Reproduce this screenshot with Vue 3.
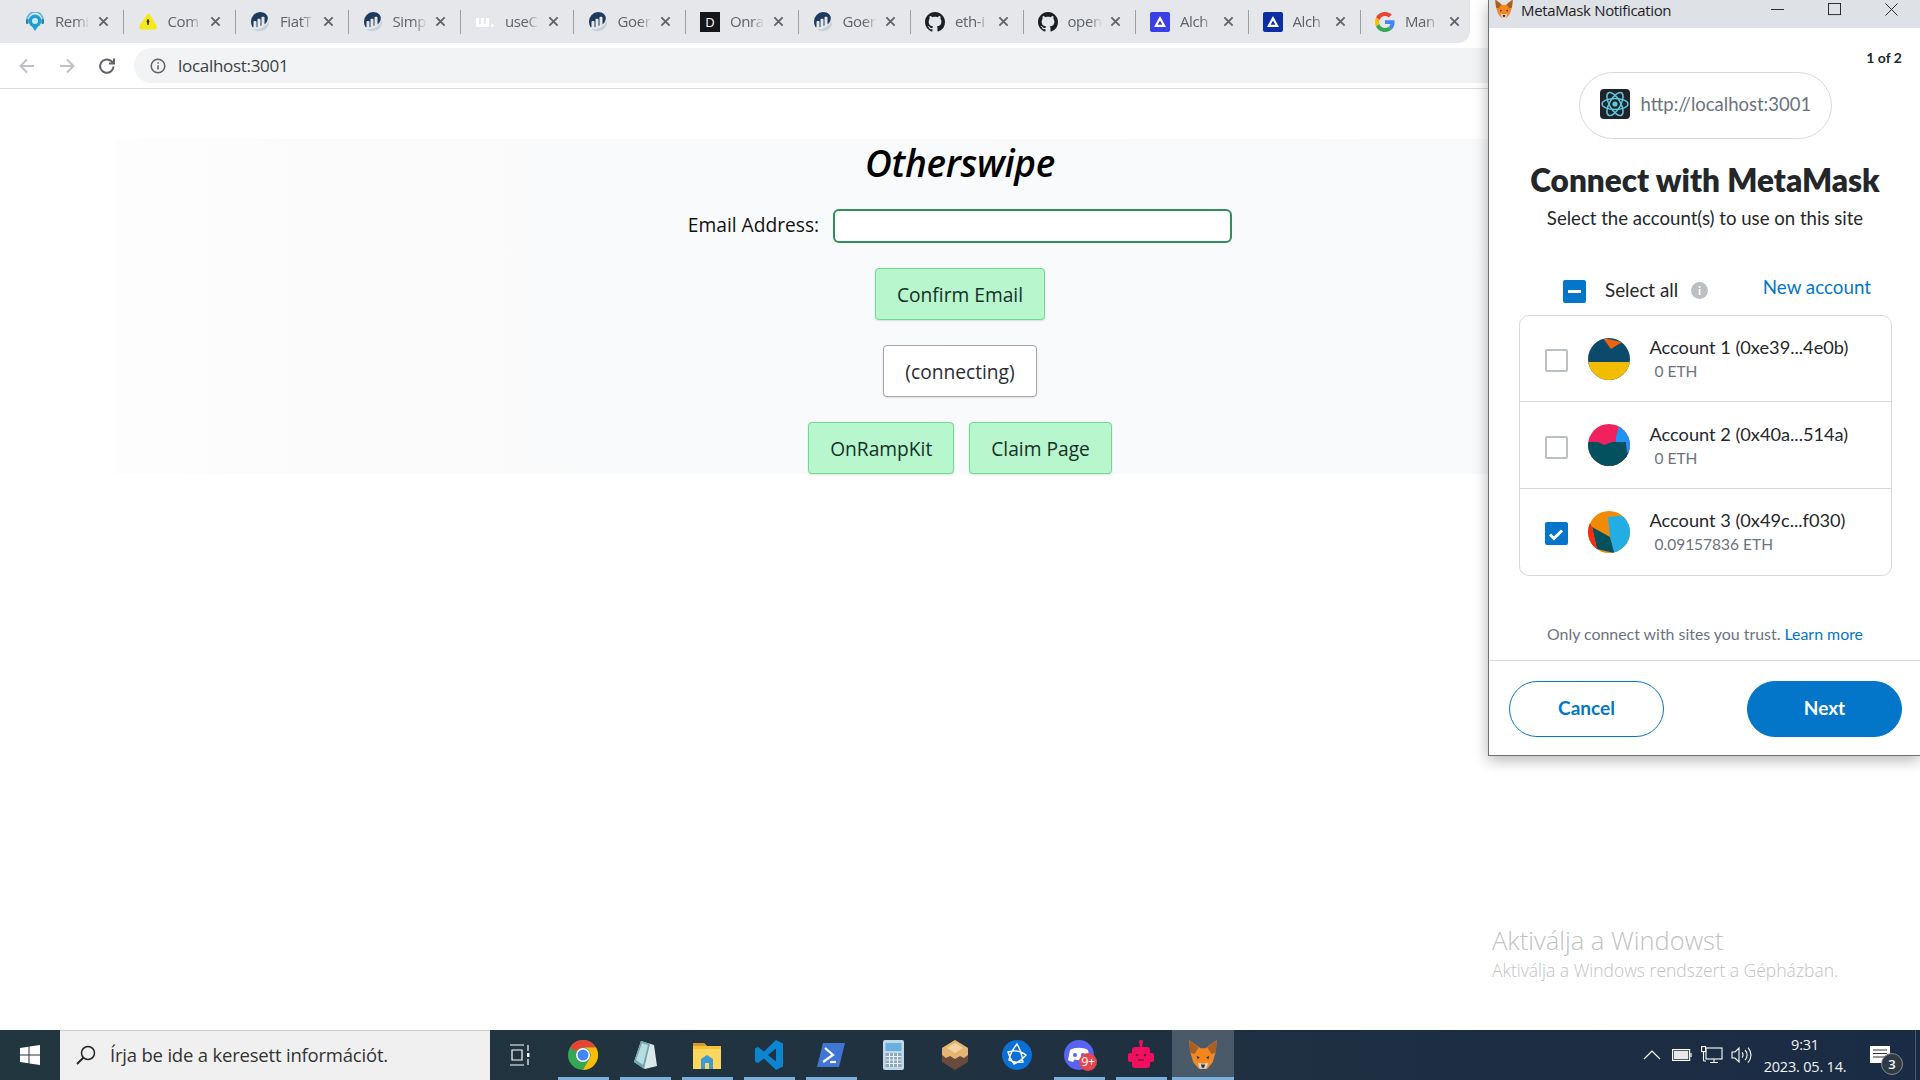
<template>
  <div class="desktop">
    <svg class="defs" width="0" height="0">
      <symbol id="etherscan" viewBox="0 0 20 20">
        <path d="M19 9a9 9 0 0 1-8 10c-3 .6-6-.5-8-2 6 1.500 13-2 16-8z" fill="#c6ced8"/>
        <path d="M10 0a9.500 9.500 0 0 0-9 9.500c0 2 .6 4 1.500 5.500.5.400 1 .3 1-.3V9.800c0-.5.3-.8.8-.8h1.400c.5 0 .8.300.8.800v5.400l1-.2V7.500c0-.5.300-.8.800-.8h1.400c.5 0 .8.300.8.800V14l1-.4V5.500c0-.5.300-.8.800-.8h1.400c.5 0 .8.300.8.800v7c2-1.500 3-3.500 3.200-5.500C18.600 3.500 15 0 10 0z" fill="#1f3a5f"/>
      </symbol>
      <symbol id="remix" viewBox="0 0 20 20">
        <circle cx="10" cy="9" r="6.500" fill="#1f9ed1"/>
        <path d="M2 10V8a8 8 0 0 1 16 0v2" fill="none" stroke="#5fb6d8" stroke-width="1.600"/>
        <rect x="1" y="7" width="2.500" height="5" rx="1" fill="#2a83a8"/>
        <rect x="16.500" y="7" width="2.500" height="5" rx="1" fill="#2a83a8"/>
        <path d="M7 14.500l3 4.500 3-4.500z" fill="#1f9ed1"/>
        <circle cx="10" cy="9" r="3" fill="#c9e9f5"/>
      </symbol>
      <symbol id="compound" viewBox="0 0 20 20">
        <path d="M9 2.500a2 2 0 0 1 3 0l6.500 11c1 1.800-.2 4-2.200 4H3.700c-2 0-3.200-2.200-2.200-4z" fill="#f5ea16"/>
        <rect x="9.200" y="7" width="1.600" height="6" rx=".8" fill="#333"/>
        <circle cx="10" cy="9.500" r="1.400" fill="#333"/>
      </symbol>
      <symbol id="wagmi" viewBox="0 0 20 20">
        <path d="M1 6h3v6h2V6h3v6h2V6h3v9H1z" fill="#fff"/>
        <circle cx="17.500" cy="13.500" r="1.700" fill="#fff"/>
      </symbol>
      <symbol id="github" viewBox="0 0 16 16">
        <path d="M8 0C3.580 0 0 3.580 0 8c0 3.540 2.290 6.530 5.470 7.590.4.070.55-.17.55-.38 0-.19-.01-.82-.01-1.490-2.010.37-2.530-.49-2.690-.94-.09-.23-.48-.94-.82-1.130-.28-.15-.68-.52-.01-.53.63-.01 1.080.58 1.230.82.72 1.210 1.870.87 2.330.66.070-.52.280-.87.510-1.070-1.780-.2-3.640-.89-3.640-3.950 0-.87.310-1.590.820-2.150-.08-.2-.36-1.020.080-2.120 0 0 .67-.21 2.200.82.640-.18 1.320-.27 2-.27.680 0 1.360.090 2 .27 1.530-1.040 2.200-.82 2.200-.82.440 1.100.160 1.920.080 2.120.510.560.820 1.270.820 2.150 0 3.070-1.870 3.750-3.650 3.950.29.250.54.730.54 1.480 0 1.070-.01 1.930-.01 2.200 0 .21.150.46.550.38A8.013 8.013 0 0016 8c0-4.420-3.580-8-8-8z" fill="#1b1f23"/>
      </symbol>
      <symbol id="google" viewBox="0 0 48 48">
        <path fill="#EA4335" d="M24 9.500c3.540 0 6.710 1.220 9.210 3.600l6.850-6.850C35.900 2.380 30.470 0 24 0 14.620 0 6.510 5.380 2.560 13.220l7.980 6.190C12.430 13.720 17.740 9.500 24 9.500z"/>
        <path fill="#4285F4" d="M46.980 24.550c0-1.570-.15-3.090-.38-4.550H24v9.020h12.940c-.58 2.960-2.260 5.480-4.780 7.180l7.730 6c4.510-4.180 7.090-10.360 7.090-17.650z"/>
        <path fill="#FBBC05" d="M10.530 28.590c-.48-1.450-.76-2.990-.76-4.590s.27-3.140.76-4.590l-7.980-6.190C.92 16.460 0 20.120 0 24c0 3.880.92 7.540 2.560 10.780l7.970-6.190z"/>
        <path fill="#34A853" d="M24 48c6.480 0 11.930-2.130 15.890-5.810l-7.730-6c-2.150 1.450-4.920 2.300-8.160 2.300-6.260 0-11.570-4.220-13.470-9.910l-7.980 6.190C6.510 42.620 14.620 48 24 48z"/>
      </symbol>
      <symbol id="fox" viewBox="0 0 30 30">
        <path d="M2 1l11 8h4l11-8-1 11-3 10-5 6h-8l-5-6-3-10z" fill="#ed8a2c"/>
        <path d="M2 1l9 7-4 6-4-1z" fill="#a85f22"/>
        <path d="M28 1l-9 7 4 6 4-1z" fill="#a85f22"/>
        <path d="M7 15l6-6h4l6 6-3 7H10z" fill="#f6851b"/>
        <path d="M10 22l3 1h4l3-1-2 6h-6z" fill="#e4d5c8"/>
        <path d="M13 24h4l-1 3h-2z" fill="#233447"/>
        <path d="M9 16l3 1-2 2zM21 16l-3 1 2 2z" fill="#233447"/>
      </symbol>
    </svg>

    <div class="browser">
      <div class="tabstrip">
        <div class="tablist">
          <div v-for="(tab, i) in tabs" :key="i" class="tab">
            <svg v-if="tab.icon" class="favicon"><use :href="'#' + tab.icon" /></svg>
            <span v-else-if="tab.alchemy" class="favicon alchemy" :style="{ background: tab.alchemy }">
              <svg viewBox="0 0 20 20" width="20" height="20"><path d="M10 4l6 11H4z M10 8.500l-2.400 4.300h4.800z" fill="#fff" fill-rule="evenodd"/></svg>
            </span>
            <span v-else class="favicon letter">D</span>
            <span class="tab-title">{{ tab.title }}</span>
            <svg class="tab-close" viewBox="0 0 12 12"><path d="M1.500 1.500l9 9M10.500 1.500l-9 9" /></svg>
          </div>
        </div>
        <div class="active-tab"><span class="active-icon"></span></div>
      </div>

      <div class="toolbar">
        <svg class="nav faded" viewBox="0 0 20 20"><path d="M17 10H4M10 3.500L3.500 10l6.500 6.500" /></svg>
        <svg class="nav faded" viewBox="0 0 20 20"><path d="M3 10h13M10 3.500l6.500 6.500-6.500 6.500" /></svg>
        <svg class="nav" viewBox="0 0 20 20"><path d="M16.500 10.500a6.700 6.700 0 1 1-2-5.200L17 7.500M17 2.500v5h-5" /></svg>
        <div class="omnibox">
          <svg class="info" viewBox="0 0 16 16"><circle cx="8" cy="8" r="6.800" /><path d="M8 7.200v4.300M8 4.300v1.400" /></svg>
          <span>localhost:3001</span>
        </div>
      </div>

      <main class="page">
        <section class="panel">
          <h1>Otherswipe</h1>
          <div class="email-row">
            <label for="email">Email Address:</label>
            <input id="email" type="text" />
          </div>
          <button class="btn green">Confirm Email</button>
          <button class="btn plain">(connecting)</button>
          <div class="btn-row">
            <button class="btn green">OnRampKit</button>
            <button class="btn green">Claim Page</button>
          </div>
        </section>
      </main>
    </div>

    <footer class="taskbar">
      <div class="start">
        <svg viewBox="0 0 20 20" width="20" height="20"><path d="M0 3l8.500-1.200V9.500H0zM9.500 1.600L20 0v9.500H9.500zM0 10.500h8.500v7.700L0 17zM9.500 10.500H20V20L9.500 18.400z" fill="#fff"/></svg>
      </div>
      <div class="search">
        <svg viewBox="0 0 22 22" width="22" height="22"><circle cx="13" cy="9" r="6.500" fill="none" stroke="#222" stroke-width="1.500"/><path d="M8.500 13.500L2 20" stroke="#222" stroke-width="1.800"/></svg>
        <span>Írja be ide a keresett információt.</span>
      </div>

      <div class="slot">
        <svg viewBox="0 0 24 24" width="24" height="24" fill="none" stroke="#fff" stroke-width="1.200"><path d="M1 2h14M1 22h14M3 7h10v10H3zM19 2v6M19 16v6"/><rect x="18" y="10" width="2.400" height="4" fill="#fff" stroke="none"/></svg>
      </div>
      <div v-for="app in apps" :key="app.name" class="slot" :class="{ open: app.open, focused: app.focused }">
        <svg v-if="app.name === 'chrome'" viewBox="0 0 30 30" width="30" height="30">
          <circle cx="15" cy="15" r="15" fill="#34a853"/>
          <path d="M15 0a15 15 0 0 1 13 7.500H15a7.500 7.500 0 0 0-6.500 3.800L2 7.500A15 15 0 0 1 15 0z" fill="#ea4335"/>
          <path d="M28 7.500A15 15 0 0 1 15 30l6.500-11.200A7.500 7.500 0 0 0 15 7.500z" fill="#fbbc04"/>
          <circle cx="15" cy="15" r="7" fill="#fff"/><circle cx="15" cy="15" r="5.500" fill="#4285f4"/>
        </svg>
        <svg v-else-if="app.name === 'notepad'" viewBox="0 0 30 30" width="30" height="30">
          <path d="M11 1l13 4 3 21-12 3L4 22z" fill="#d9e8ea"/>
          <path d="M11 1l9 3-6 25-10-7z" fill="#6fa5ac"/>
          <path d="M12 3l6 2-5 20-7-5z" fill="#b8dde0"/>
        </svg>
        <svg v-else-if="app.name === 'folder'" viewBox="0 0 30 30" width="30" height="30">
          <path d="M1 3h11l3 3h14v23H1z" fill="#f5c33b"/>
          <path d="M1 3h11l3 3H1z" fill="#d9972b"/>
          <path d="M1 9h28v20H1z" fill="#fbd75f"/>
          <path d="M9 29V19l6-4 6 4v10h-4v-6h-4v6z" fill="#3f9bd8"/>
        </svg>
        <svg v-else-if="app.name === 'vscode'" viewBox="0 0 30 30" width="30" height="30">
          <path fill-rule="evenodd" d="M22 0l7 3.500v23L22 30 10 18.500 4 23l-3-1.500v-13L4 7l6 4.500zM22 8.500L14 15l8 6.500z" fill="#0d84d0"/>
        </svg>
        <svg v-else-if="app.name === 'powershell'" viewBox="0 0 30 30" width="30" height="30">
          <path d="M7 3h22l-6 24H1z" fill="#3f76d6"/>
          <path d="M9 8l8 7-10 7" fill="none" stroke="#fff" stroke-width="2.200"/><path d="M14 22h6" stroke="#fff" stroke-width="2.200"/>
        </svg>
        <svg v-else-if="app.name === 'calc'" viewBox="0 0 30 30" width="30" height="30">
          <rect x="5" y="0" width="21" height="30" rx="2" fill="#bfd9ea"/>
          <rect x="7.500" y="3" width="16" height="8" fill="#6ab0dc"/>
          <rect x="7.500" y="13" width="16" height="14" fill="#8fa9ba"/>
          <path d="M7.500 16.500h16M7.500 20h16M7.500 23.500h16M11.500 13v14M15.500 13v14M19.500 13v14" stroke="#e6f0f6" stroke-width="1"/>
        </svg>
        <svg v-else-if="app.name === 'box'" viewBox="0 0 30 30" width="30" height="30">
          <path d="M15 0l13 8v14l-13 8-13-8V8z" fill="#6b4a3e"/>
          <path d="M15 0l13 8v7l-4 3-4-2-5 3-5-3-4 2-4-3V8z" fill="#e6b574"/>
          <path d="M15 3l8 5-8 5-8-5z" fill="#f3d3a0"/>
        </svg>
        <svg v-else-if="app.name === 'blue'" viewBox="0 0 30 30" width="30" height="30">
          <circle cx="15" cy="15" r="15" fill="#0a70d6"/>
          <path d="M15 4c3 5 5 11 6 18-5 1-10 0-14-2 1-6 4-11 8-16zM6 12c6-2 13-1 18 3-3 4-7 7-12 9-3-4-5-8-6-12z" fill="none" stroke="#fff" stroke-width="1.400"/>
        </svg>
        <div v-else-if="app.name === 'discord'" class="discord">
          <svg viewBox="0 0 30 30" width="30" height="30">
            <ellipse cx="15" cy="15" rx="15" ry="15" fill="#5865f2"/>
            <path d="M6 10c5-3 13-3 18 0l2 10c-1.500 1-3 1.500-5 2l-1.500-2.500c-3 .7-6 .7-9 0L9 22c-2-.5-3.500-1-5-2z" fill="#fff"/>
            <circle cx="11" cy="15" r="2" fill="#5865f2"/><circle cx="19" cy="15" r="2" fill="#5865f2"/>
          </svg>
          <span class="badge">9+</span>
        </div>
        <svg v-else-if="app.name === 'robot'" viewBox="0 0 30 30" width="30" height="30">
          <path d="M15 0v7" stroke="#f0105f" stroke-width="2.500"/><circle cx="15" cy="2" r="2" fill="#f0105f"/>
          <rect x="6" y="7" width="18" height="21" rx="3" fill="#f0105f"/>
          <rect x="2" y="13" width="5" height="9" rx="2" fill="#f0105f"/><rect x="23" y="13" width="5" height="9" rx="2" fill="#f0105f"/>
          <circle cx="11" cy="15" r="1.300" fill="#7b0c36"/><circle cx="19" cy="15" r="1.300" fill="#7b0c36"/><path d="M12 20h6" stroke="#7b0c36" stroke-width="1.200"/>
        </svg>
        <svg v-else class="fox-icon"><use href="#fox" /></svg>
      </div>

      <div class="tray">
        <div class="tray-icon"><svg viewBox="0 0 18 10" width="18" height="10" fill="none" stroke="#fff" stroke-width="1.200"><path d="M1 9l8-8 8 8"/></svg></div>
        <div class="tray-icon"><svg viewBox="0 0 20 12" width="20" height="12" fill="none" stroke="#fff" stroke-width="1.200"><rect x=".6" y=".6" width="17" height="10.800"/><rect x="2" y="2" width="14.200" height="8" fill="#e8e8e8" stroke="none"/><path d="M19 4v4"/></svg></div>
        <div class="tray-icon"><svg viewBox="0 0 22 18" width="22" height="18" fill="none" stroke="#fff" stroke-width="1.100"><rect x="5" y="2" width="16" height="11"/><path d="M13 13v3M9 16.500h8M2.500 6v9M2.500 15H5"/><rect x=".6" y=".6" width="4" height="5" fill="#1c2f45"/></svg></div>
        <div class="tray-icon"><svg viewBox="0 0 22 18" width="22" height="18" fill="none" stroke="#fff" stroke-width="1.100"><path d="M1 6h3l4-4v14l-4-4H1zM11 6.500a3.500 3.500 0 0 1 0 5M14 4a7 7 0 0 1 0 10M17 1.500a11 11 0 0 1 0 15"/></svg></div>
        <div class="clock">
          <span>9:31</span>
          <span>2023. 05. 14.</span>
        </div>
        <div class="notif">
          <svg viewBox="0 0 20 18" width="20" height="18"><path d="M0 0h20v17H0z" fill="#fff"/><path d="M3 4h14M3 7.500h14M3 11h14" stroke="#333" stroke-width="1"/></svg>
          <span class="notif-count">3</span>
        </div>
        <div class="tray-edge"></div>
      </div>
    </footer>

    <div class="watermark">
      <div class="wm-big">Aktiválja a Windowst</div>
      <div class="wm-small">Aktiválja a Windows rendszert a Gépházban.</div>
    </div>

    <aside class="popup">
      <header class="titlebar">
        <svg class="title-fox"><use href="#fox" /></svg>
        <span class="title-text">MetaMask Notification</span>
        <svg class="win-btn" viewBox="0 0 14 14"><path d="M0 7h14" /></svg>
        <svg class="win-btn" viewBox="0 0 14 14"><rect x=".5" y=".5" width="13" height="12" /></svg>
        <svg class="win-btn" viewBox="0 0 14 14"><path d="M.5.500l13 13M13.500.500l-13 13" /></svg>
      </header>

      <div class="mm-body">
        <div class="counter">1 of 2</div>
        <div class="origin">
          <span class="origin-icon">
            <svg viewBox="0 0 30 30" width="30" height="30" fill="none" stroke="#5fc6dc" stroke-width="1.500">
              <ellipse cx="15" cy="15" rx="13" ry="5.500" />
              <ellipse cx="15" cy="15" rx="13" ry="5.500" transform="rotate(60 15 15)" />
              <ellipse cx="15" cy="15" rx="13" ry="5.500" transform="rotate(120 15 15)" />
              <circle cx="15" cy="15" r="2.600" fill="#5fc6dc" stroke="none" />
            </svg>
          </span>
          <span>http://localhost:3001</span>
        </div>
        <h2>Connect with MetaMask</h2>
        <p class="subtitle">Select the account(s) to use on this site</p>

        <div class="select-row">
          <span class="check on"><span class="dash"></span></span>
          <span class="select-all">Select all</span>
          <span class="info-dot">i</span>
          <a class="new-account">New account</a>
        </div>

        <ul class="accounts">
          <li v-for="acc in accounts" :key="acc.name" class="account">
            <span class="check" :class="{ on: acc.checked }">
              <svg v-if="acc.checked" viewBox="0 0 22 22" width="22" height="22"><path d="M5 11.500l4 4 8-8" fill="none" stroke="#fff" stroke-width="3"/></svg>
            </span>
            <svg class="avatar" viewBox="0 0 42 42">
              <rect width="42" height="42" :fill="acc.base" />
              <polygon v-for="(shape, j) in acc.shapes" :key="j" :points="shape.points" :fill="shape.fill" />
            </svg>
            <div class="acc-text">
              <div class="acc-name">{{ acc.name }}</div>
              <div class="acc-bal">{{ acc.balance }}</div>
            </div>
          </li>
        </ul>

        <p class="trust">Only connect with sites you trust. <a>Learn more</a></p>
        <div class="actions">
          <button class="pill outline">Cancel</button>
          <button class="pill solid">Next</button>
        </div>
      </div>
    </aside>
  </div>
</template>

<script setup>
const tabs = [
  { icon: 'remix', title: 'Remi' },
  { icon: 'compound', title: 'Com' },
  { icon: 'etherscan', title: 'FiatT' },
  { icon: 'etherscan', title: 'Simp' },
  { icon: 'wagmi', title: 'useC' },
  { icon: 'etherscan', title: 'Goer' },
  { title: 'Onra' },
  { icon: 'etherscan', title: 'Goer' },
  { icon: 'github', title: 'eth-i' },
  { icon: 'github', title: 'open' },
  { alchemy: '#3a3fe6', title: 'Alch' },
  { alchemy: '#0b2fa3', title: 'Alch' },
  { icon: 'google', title: 'Man' },
]

const apps = [
  { name: 'chrome', open: true },
  { name: 'notepad', open: true },
  { name: 'folder', open: true },
  { name: 'vscode', open: true },
  { name: 'powershell', open: true },
  { name: 'calc' },
  { name: 'box' },
  { name: 'blue' },
  { name: 'discord', open: true },
  { name: 'robot', open: true },
  { name: 'fox', open: true, focused: true },
]

const accounts = [
  {
    name: 'Account 1 (0xe39...4e0b)',
    balance: '0 ETH',
    base: '#0b4a6b',
    shapes: [
      { fill: '#f2bc00', points: '0,24 42,24 42,42 0,42' },
      { fill: '#f0640f', points: '15,0 34,4 23,11' },
    ],
  },
  {
    name: 'Account 2 (0x40a...514a)',
    balance: '0 ETH',
    base: '#f0215f',
    shapes: [
      { fill: '#03505f', points: '0,18 10,18 16,21 24,18 38,18 39,28 42,31 42,42 0,42' },
      { fill: '#2094f3', points: '28,13 31,2 42,8 42,31 39,28 38,18 28,18' },
    ],
  },
  {
    name: 'Account 3 (0x49c...f030)',
    balance: '0.09157836 ETH',
    checked: true,
    base: '#f18a07',
    shapes: [
      { fill: '#23ade5', points: '20,6 42,4 42,42 26,42 22,26' },
      { fill: '#03505f', points: '4,16 22,26 26,41 26,42 9,38' },
      { fill: '#f2300f', points: '0,8 4,16 9,38 9,42 0,42' },
    ],
  },
]
</script>

<style>
html,
body {
  margin: 0;
  overflow: hidden;
  background: #fff;
}
</style>

<style scoped>
.desktop {
  position: relative;
  width: 1920px;
  height: 1080px;
  display: flex;
  flex-direction: column;
  overflow: hidden;
  font-family: "Open Sans", sans-serif;
  background: #fff;
}

.defs {
  position: absolute;
}

.browser {
  flex: 1;
  display: flex;
  flex-direction: column;
}

.tabstrip {
  height: 43px;
  display: flex;
  background: #fff;
}

.tablist {
  width: 1470px;
  box-sizing: border-box;
  padding-left: 11px;
  display: flex;
  align-items: center;
  background: #e5e7ea;
  border-radius: 0 0 12px 0;
}

.tab {
  width: 112.5px;
  height: 24px;
  flex: none;
  box-sizing: border-box;
  padding: 0 14px;
  display: flex;
  align-items: center;
  border-right: 1px solid #9a9da1;
}

.tab:last-child {
  border-right: none;
}

.favicon {
  width: 20px;
  height: 20px;
  flex: none;
}

.alchemy {
  display: block;
  border-radius: 2px;
}

.letter {
  background: #14171a;
  color: #fff;
  font-size: 13px;
  line-height: 20px;
  text-align: center;
}

.tab-title {
  width: 38px;
  margin: -2px 0 0 10px;
  white-space: nowrap;
  font-size: 15px;
  letter-spacing: -0.4px;
  color: #5f6368;
  -webkit-mask-image: linear-gradient(90deg, #000 55%, rgba(0, 0, 0, 0.15) 85%);
  mask-image: linear-gradient(90deg, #000 55%, rgba(0, 0, 0, 0.15) 85%);
}

.tab-close {
  width: 11px;
  height: 11px;
  margin-left: auto;
  fill: none;
  stroke: #5f6368;
  stroke-width: 2;
}

.active-tab {
  flex: 1;
  display: flex;
  align-items: center;
  justify-content: flex-end;
}

.active-icon {
  width: 4px;
  height: 20px;
  background: #222;
}

.toolbar {
  height: 46px;
  box-sizing: border-box;
  padding: 5px 0 5px 17px;
  display: flex;
  align-items: center;
  gap: 20px;
  border-bottom: 1px solid #dadce0;
}

.nav {
  width: 20px;
  height: 20px;
  fill: none;
  stroke: #5f6368;
  stroke-width: 2;
}

.nav.faded {
  stroke: #bdc1c6;
}

.omnibox {
  flex: 1;
  height: 35px;
  margin-left: -3px;
  padding-left: 16px;
  display: flex;
  align-items: center;
  gap: 12px;
  background: #f1f3f4;
  border-radius: 18px 0 0 18px;
  font-size: 17px;
  letter-spacing: -0.3px;
  color: #3c4043;
}

.info {
  width: 16px;
  height: 16px;
  fill: none;
  stroke: #5f6368;
  stroke-width: 1.500;
}

.page {
  flex: 1;
  padding-top: 50px;
}

.panel {
  width: 1690px;
  height: 335px;
  margin: 0 auto;
  display: flex;
  flex-direction: column;
  align-items: center;
  background: linear-gradient(90deg, #fdfdfd, #fbfbfc 12%, #f9fafb 38%, #f8f9fa);
}

h1 {
  margin: 0;
  height: 48px;
  font-size: 37px;
  line-height: 48px;
  font-style: italic;
  font-weight: 600;
  letter-spacing: -0.3px;
  color: #000;
}

.email-row {
  margin-top: 22px;
  display: flex;
  align-items: center;
  gap: 14px;
}

.email-row label {
  margin-top: -3px;
  font-size: 19.200px;
  font-weight: 500;
  color: #111;
}

.email-row input {
  width: 399px;
  height: 34px;
  box-sizing: border-box;
  border: 2px solid #2f8f5b;
  border-radius: 6px;
  background: #fff;
  outline: none;
}

.btn {
  height: 52px;
  box-sizing: border-box;
  margin-top: 25px;
  padding: 0 21px;
  border-radius: 4px;
  font-family: inherit;
  font-size: 19.200px;
  font-weight: 500;
  box-shadow: 0 1px 2px rgba(0, 0, 0, 0.12);
}

.btn.green {
  background: #b8f6cd;
  border: 1px solid #72d995;
  color: #16302a;
}

.btn.plain {
  background: #fff;
  border: 1px solid #a5a5aa;
  color: #2b2b33;
}

.btn-row {
  margin-top: 25px;
  display: flex;
  gap: 15px;
}

.btn-row .btn {
  margin-top: 0;
}

.taskbar {
  height: 50px;
  flex: none;
  display: flex;
  background: linear-gradient(90deg, #21363f, #203240 50%, #1a2b45);
}

.start {
  width: 60px;
  display: flex;
  align-items: center;
  justify-content: center;
}

.search {
  width: 430px;
  box-sizing: border-box;
  padding: 0 0 2px 15px;
  display: flex;
  align-items: center;
  gap: 13px;
  background: #f0f0f0;
  border-top: 1px solid #c8c8c8;
  font-size: 18.500px;
  letter-spacing: -0.2px;
  color: #333;
}

.slot {
  position: relative;
  width: 62px;
  display: flex;
  align-items: center;
  justify-content: center;
}

.slot.focused {
  background: #4a5a68;
}

.slot.open::after {
  content: '';
  position: absolute;
  left: 6px;
  right: 5px;
  bottom: 0;
  height: 3px;
  background: #7ab0de;
}

.slot.focused::after {
  left: 0;
  right: 0;
}

.fox-icon {
  width: 32px;
  height: 32px;
}

.discord {
  position: relative;
  width: 30px;
  height: 30px;
}

.badge {
  position: absolute;
  right: -3px;
  bottom: -1px;
  width: 18px;
  height: 18px;
  border-radius: 50%;
  background: #e2474f;
  color: #fff;
  font-size: 12.500px;
  line-height: 18px;
  letter-spacing: -0.5px;
  text-align: center;
}

.tray {
  margin-left: auto;
  width: 283px;
  display: flex;
  align-items: center;
}

.tray-icon {
  width: 30px;
  display: flex;
  justify-content: center;
}

.clock {
  width: 96px;
  display: flex;
  flex-direction: column;
  align-items: center;
  gap: 3px;
  font-size: 14.500px;
  line-height: 19px;
  letter-spacing: -0.2px;
  color: #f2f2f2;
}

.notif {
  position: relative;
  width: 54px;
  height: 50px;
  display: flex;
  align-items: center;
  justify-content: center;
}

.notif-count {
  position: absolute;
  left: 28px;
  top: 23px;
  width: 20px;
  height: 20px;
  border: 1px solid #888;
  border-radius: 50%;
  background: #2f3b44;
  color: #fff;
  font-size: 13px;
  font-weight: 600;
  line-height: 20px;
  text-align: center;
}

.tray-edge {
  width: 1px;
  height: 100%;
  margin-left: 8px;
  background: #4c5b6c;
}

.watermark {
  position: absolute;
  left: 1492px;
  top: 922px;
  color: #c2c2c2;
  font-weight: 300;
}

.wm-big {
  font-size: 25.500px;
  line-height: 36px;
}

.wm-small {
  font-size: 17.500px;
  line-height: 24px;
}

.popup {
  position: absolute;
  left: 1488px;
  top: 0;
  width: 432px;
  height: 756px;
  box-sizing: border-box;
  display: flex;
  flex-direction: column;
  background: #fff;
  border-left: 1px solid #6f6f6f;
  border-bottom: 1px solid #6f6f6f;
  box-shadow: 0 4px 14px rgba(0, 0, 0, 0.3);
}

.titlebar {
  height: 28px;
  box-sizing: border-box;
  padding-bottom: 9px;
  flex: none;
  display: flex;
  align-items: center;
  background: #dee1e6;
  font-size: 15px;
  color: #1f1f1f;
}

.title-fox {
  width: 20px;
  height: 20px;
  margin: -2px 0 0 5px;
}

.title-text {
  margin-left: 7px;
  letter-spacing: -0.35px;
}

.win-btn {
  width: 13px;
  height: 13px;
  fill: none;
  stroke: #222;
  stroke-width: 1;
  margin-left: 44px;
}

.title-text + .win-btn {
  margin-left: auto;
}

.win-btn:last-child {
  margin-right: 22px;
}

.mm-body {
  flex: 1;
  padding-left: 1px;
  display: flex;
  flex-direction: column;
  align-items: center;
  font-family: Lato, sans-serif;
  color: #24272a;
}

.counter {
  align-self: flex-end;
  margin: 20px 18px 0 0;
  font-size: 14px;
  line-height: 20px;
  font-weight: 700;
}

.origin {
  width: 253px;
  height: 67px;
  box-sizing: border-box;
  margin-top: 4px;
  padding: 0 0 3px 20px;
  display: flex;
  align-items: center;
  gap: 11px;
  border: 1px solid #d6d9dc;
  border-radius: 34px;
  font-size: 18.500px;
  color: #6a737d;
}

.origin-icon {
  width: 30px;
  height: 30px;
  border-radius: 4px;
  background: #20232a;
}

h2 {
  margin: 22px 0 0;
  font-size: 31.500px;
  line-height: 38px;
  font-weight: 800;
  color: #24272a;
}

.subtitle {
  margin: 8px 0 0;
  font-size: 18.600px;
  line-height: 22px;
}

.select-row {
  align-self: stretch;
  height: 32px;
  margin-top: 44px;
  padding-left: 73px;
  display: flex;
  align-items: center;
  font-size: 18.800px;
}

.check {
  width: 23px;
  height: 23px;
  flex: none;
  box-sizing: border-box;
  margin-top: 4px;
  display: flex;
  align-items: center;
  justify-content: center;
  border: 2px solid #bbc0c5;
  border-radius: 2px;
}

.check.on {
  background: #0376c9;
  border-color: #0376c9;
}

.check svg {
  margin: -2px;
}

.dash {
  width: 13px;
  height: 3px;
  background: #fff;
}

.select-all {
  margin-left: 19px;
}

.info-dot {
  width: 17px;
  height: 17px;
  margin: 2px 0 0 13px;
  border-radius: 50%;
  background: #bbc0c5;
  color: #fff;
  font-size: 12px;
  font-weight: 700;
  line-height: 17px;
  text-align: center;
}

.new-account {
  margin: -5px 49px 0 auto;
  color: #0376c9;
}

.accounts {
  width: 373px;
  box-sizing: border-box;
  margin: 10px 0 0;
  padding: 0;
  list-style: none;
  border: 1px solid #d6d9dc;
  border-radius: 10px;
}

.account {
  height: 86.400px;
  box-sizing: border-box;
  padding-left: 25px;
  display: flex;
  align-items: center;
  border-bottom: 1px solid #d6d9dc;
}

.account:last-child {
  border-bottom: none;
}

.avatar {
  width: 42px;
  height: 42px;
  margin-left: 20px;
  border-radius: 50%;
}

.acc-text {
  margin: 0 0 0 20px;
}

.acc-name {
  font-size: 18.200px;
  line-height: 24px;
}

.acc-bal {
  margin: 1px 0 0 5px;
  font-size: 15.500px;
  line-height: 22px;
  color: #6a737d;
}

.trust {
  margin: 48px 0 0;
  font-size: 15.900px;
  line-height: 20px;
  color: #6a737d;
}

.trust a {
  color: #0376c9;
}

.actions {
  align-self: stretch;
  height: 96px;
  box-sizing: border-box;
  margin-top: 16px;
  padding: 20px 18px 0 19px;
  display: flex;
  justify-content: space-between;
  border-top: 1px solid #d6d9dc;
}

.pill {
  width: 155px;
  height: 56px;
  padding-bottom: 5px;
  border-radius: 28px;
  font-family: inherit;
  font-size: 19px;
  font-weight: 700;
}

.pill.outline {
  background: #fff;
  border: 1px solid #0376c9;
  color: #0376c9;
}

.pill.solid {
  background: #0376c9;
  border: 1px solid #0376c9;
  color: #fff;
}
</style>
